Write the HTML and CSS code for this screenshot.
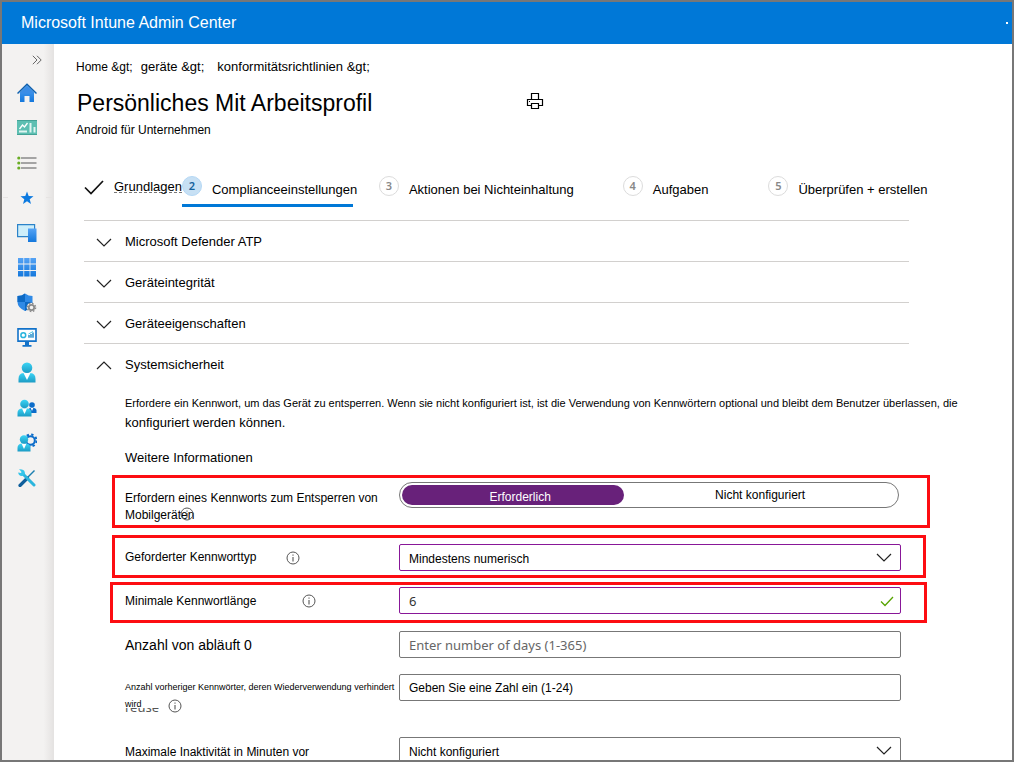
FILE: index.html
```
<!DOCTYPE html>
<html lang="de">
<head>
<meta charset="utf-8">
<title>Microsoft Intune Admin Center</title>
<link rel="stylesheet" href="styles.css">
</head>
<body>
<svg class="defs" aria-hidden="true">
  <defs>
    <linearGradient id="cyan" x1="0" y1="0" x2="0" y2="1"><stop offset="0" stop-color="#3bd4f5"/><stop offset="1" stop-color="#1c9bc4"/></linearGradient>
    <linearGradient id="blue" x1="0" y1="0" x2="0" y2="1"><stop offset="0" stop-color="#55a3f5"/><stop offset="1" stop-color="#1478dc"/></linearGradient>
    <symbol id="down" viewBox="0 0 16 9"><path d="M1 1l7 7 7-7" fill="none" stroke="#222" stroke-width="1.2"/></symbol>
    <symbol id="info" viewBox="0 0 14 14"><circle cx="7" cy="7" r="6" fill="none" stroke="#555"/><path d="M7 6v4.500M7 3.500v1.200" stroke="#444" stroke-width="1"/></symbol>
  </defs>
</svg>
<div class="app">
  <header class="topbar"><span>Microsoft Intune Admin Center</span><span class="topbar-dot"></span></header>
  <div class="shell">
    <nav class="sidebar" aria-label="Hauptmenü">
      <button class="expand" aria-label="Menü erweitern"><svg width="10" height="10" viewBox="0 0 10 10"><path d="M.8.8L5 5 .8 9.2M5 .8L9.2 5 5 9.2" fill="none" stroke="#666" stroke-width="1"/></svg></button>
      <a class="nav-item" href="#" aria-label="Startseite"><svg width="20" height="20" viewBox="0 0 20 20"><path d="M3 9l7-7 7 7v10h-4.500v-6h-5v6H3z" fill="url(#blue)"/><path d="M.5 10.500L10 1.200l9.500 9.300" fill="none" stroke="#0c5fae" stroke-width="1.500"/><path d="M2.500 10.500L10 3l7.500 7.500z" fill="#3b8de6"/></svg></a>
      <a class="nav-item" href="#" aria-label="Dashboard"><svg width="20" height="15" viewBox="0 0 20 15"><path fill="#5dbfb2" d="M0 0h20v15H0z"/><path d="M0 .5h20M0 14.500h20" stroke="#43a296"/><path d="M2.500 9l3-4 2 2 3-4" fill="none" stroke="#fff" stroke-width="1.300"/><path d="M2 11.500h8M13.500 3v9.500M17.500 7v5.500" stroke="#dff5f1" stroke-width="2"/></svg></a>
      <a class="nav-item" href="#" aria-label="Alle Dienste"><svg width="20" height="14" viewBox="0 0 20 14"><path d="M4 2h15.500M4 7h15.500M4 12h15.500" stroke="#8b8b8b" stroke-width="1.500"/><g fill="#6aad25"><circle cx="1.800" cy="2" r="1.600"/><circle cx="1.800" cy="7" r="1.600"/><circle cx="1.800" cy="12" r="1.600"/></g></svg></a>
      <a class="nav-item nav-favorites" href="#" aria-label="Favoriten"><svg width="14" height="14" viewBox="0 0 14 14"><path fill="#0c7ae0" d="M7 .5l1.700 4.500 4.800.2-3.800 3 1.300 4.900-4-2.800-4 2.800 1.300-4.900-3.800-3L5.300 5z"/></svg></a>
      <a class="nav-item" href="#" aria-label="Geräte"><svg width="20" height="20" viewBox="0 0 20 20"><path d="M.6 1.600h17v12H.6z" fill="#cdeefa" stroke="#2b83c9" stroke-width="1.200"/><path fill="url(#blue)" d="M11 5.500h8.500V19H11z"/></svg></a>
      <a class="nav-item" href="#" aria-label="Apps"><svg width="18" height="19" viewBox="0 0 18 19"><path fill="url(#blue)" d="M0 0h5.400v5.500H0zM6.200 0h5.400v5.500H6.200zM12.400 0H18v5.500h-5.600zM0 6.500h5.400V12H0zM6.200 6.500h5.400V12H6.200zM12.400 6.500H18V12h-5.600zM0 13h5.400v5.500H0zM6.200 13h5.400v5.500H6.200zM12.400 13H18v5.500h-5.600z"/></svg></a>
      <a class="nav-item" href="#" aria-label="Endpunktsicherheit"><svg width="20" height="20" viewBox="0 0 20 20"><path d="M8 .5Q11.500 3 15.500 3v6q0 5.500-7.500 9Q.5 14.500.5 9V3Q5 3 8 .5z" fill="#2f8ae6"/><path d="M8 .5v8.500H.5V3Q5 3 8 .5zM8 9h7.500q0 5.500-7.500 9z" fill="#0c69c4"/><circle cx="14.500" cy="14.500" r="4.800" fill="#f3f2f1"/><circle cx="14.500" cy="14.500" r="2.700" fill="none" stroke="#8c8c8c" stroke-width="1.800"/><circle cx="14.500" cy="14.500" r="4.100" fill="none" stroke="#8c8c8c" stroke-width="1.400" stroke-dasharray="1.610 1.610"/></svg></a>
      <a class="nav-item" href="#" aria-label="Berichte"><svg width="20" height="19" viewBox="0 0 20 19"><path d="M1 .9h18v12.200H1z" fill="#fff" stroke="#1272c9" stroke-width="1.600"/><path d="M8 13h4v4h2.500v1.700h-9V17H8z" fill="#1272c9"/><circle cx="6.300" cy="7.200" r="2.400" fill="none" stroke="#27b4dd" stroke-width="1.500"/><path d="M12 9.800V7M14 9.800V6M16 9.800V4.500" stroke="#1687c7" stroke-width="1.400"/><path d="M11.500 6L16 3.500" stroke="#4ac6e5"/></svg></a>
      <a class="nav-item" href="#" aria-label="Benutzer"><svg width="18" height="21" viewBox="0 0 18 21"><path d="M.5 20.500V17q0-5.500 5-6h7q5 .500 5 6v3.500z" fill="url(#cyan)"/><path d="M5.500 11h7L9 18z" fill="#fff"/><circle cx="9" cy="5.800" r="5.300" fill="url(#cyan)"/></svg></a>
      <a class="nav-item" href="#" aria-label="Gruppen"><svg width="20" height="18" viewBox="0 0 20 18"><path d="M11 14V11.500q0-2.500 4-3 4.500.500 4.500 3V14z" fill="#0b6cc9"/><path d="M13.500 8.500h3L15 12z" fill="#fff"/><circle cx="15" cy="6" r="2.800" fill="#0b6cc9"/><path d="M.5 17.500v-3.500q0-4 4-4.500h6q4 .500 4 4.500v3.500z" fill="url(#cyan)"/><path d="M5 9.500h5L7.500 15z" fill="#fff"/><circle cx="7.500" cy="5" r="4.300" fill="url(#cyan)"/></svg></a>
      <a class="nav-item" href="#" aria-label="Mandantenverwaltung"><svg width="20" height="19" viewBox="0 0 20 19"><circle cx="13.500" cy="7.500" r="4.300" fill="none" stroke="#0b6cc9" stroke-width="2"/><circle cx="13.500" cy="7.500" r="6" fill="none" stroke="#0b6cc9" stroke-width="1.900" stroke-dasharray="2.360 2.350"/><path d="M.5 18.500V15q0-4 4-4.500h5q4 .500 4 4.500v3.500z" fill="url(#cyan)"/><path d="M4.500 10.500h5L7 16z" fill="#fff"/><circle cx="7" cy="6.500" r="4.200" fill="url(#cyan)"/></svg></a>
      <a class="nav-item" href="#" aria-label="Problembehandlung"><svg width="18" height="18" viewBox="0 0 18 18"><path d="M16.500 1.500L10 8" stroke="#1c7fb0" stroke-width="1.500"/><path d="M9.500 9L2 16.500" stroke="#0f5f9c" stroke-width="3.200" stroke-linecap="round"/><path d="M5 5l11 11" stroke="#2bb5dd" stroke-width="3" stroke-linecap="round"/><path d="M3.800.6Q1 0 1 0L3.500 3 3 4 .2 3.500Q.5 7.500 5 6.800L7 5Q7 1 3.800.6z" fill="#35c5ea"/></svg></a>
    </nav>
    <main class="content">
      <nav class="breadcrumb" aria-label="Brotkrumen"><a href="#">Home &amp;gt;</a><a href="#">geräte &amp;gt;</a><a href="#">konformitätsrichtlinien &amp;gt;</a></nav>
      <div class="title-row">
        <h1>Persönliches Mit Arbeitsprofil</h1>
        <button class="print" aria-label="Drucken"><svg width="18" height="18" viewBox="0 0 18 18"><path d="M5.500 7.500v-6h7v6M5.500 13.500h-4v-6h15v6h-4M5.500 11.500h7v5h-7z" fill="none" stroke="#000" stroke-width="1.200"/><path d="M3 9h1v1H3z"/></svg></button>
      </div>
      <p class="subtitle">Android für Unternehmen</p>

      <ol class="steps">
        <li class="step step-done"><svg width="20" height="15" viewBox="0 0 20 15"><path d="M1 7.500l6 6L19 1" fill="none" stroke="#111" stroke-width="1.700"/></svg><span>Grundlagen</span></li>
        <li class="step step-current"><b>2</b><span>Complianceeinstellungen</span></li>
        <li class="step step-actions"><b>3</b><span>Aktionen bei Nichteinhaltung</span></li>
        <li class="step step-tasks"><b>4</b><span>Aufgaben</span></li>
        <li class="step step-review"><b>5</b><span>Überprüfen + erstellen</span></li>
      </ol>

      <div class="sections">
        <button class="section"><svg width="16" height="9"><use href="#down"/></svg>Microsoft Defender ATP</button>
        <button class="section"><svg width="16" height="9"><use href="#down"/></svg>Geräteintegrität</button>
        <button class="section"><svg width="16" height="9"><use href="#down"/></svg>Geräteeigenschaften</button>
        <button class="section section-open" aria-expanded="true"><svg width="16" height="9"><use href="#down"/></svg>Systemsicherheit</button>
      </div>

      <div class="intro">
        <p>Erfordere ein Kennwort, um das Gerät zu entsperren. Wenn sie nicht konfiguriert ist, ist die Verwendung von Kennwörtern optional und bleibt dem Benutzer überlassen, die <span class="intro-end">konfiguriert werden können.</span></p>
        <a href="#">Weitere Informationen</a>
      </div>

      <form class="settings">
        <div class="row marked row-require">
          <div class="label" id="require">Erfordern eines Kennworts zum Entsperren von Mobilgeräten<svg class="info over" width="14" height="14"><use href="#info"/></svg></div>
          <div class="toggle" role="group" aria-labelledby="require">
            <button type="button" class="selected" aria-pressed="true">Erforderlich</button>
            <button type="button" aria-pressed="false">Nicht konfiguriert</button>
          </div>
        </div>
        <div class="row marked row-type">
          <div class="label"><label for="type">Geforderter Kennworttyp</label><svg class="info info-type" width="14" height="14"><use href="#info"/></svg></div>
          <div class="field active"><select id="type"><option>Mindestens numerisch</option></select><svg class="mark" width="16" height="9"><use href="#down"/></svg></div>
        </div>
        <div class="row marked row-length">
          <div class="label"><label for="length">Minimale Kennwortlänge</label><svg class="info info-length" width="14" height="14"><use href="#info"/></svg></div>
          <div class="field active"><input class="ui" id="length" value="6"><svg class="mark valid" width="14" height="11" viewBox="0 0 14 11"><path d="M1 5.500l4 4L13 1" fill="none" stroke="#57a300" stroke-width="1.300"/></svg></div>
        </div>
        <div class="row row-expiry">
          <div class="label"><label class="large" for="days">Anzahl von abläuft 0</label></div>
          <div class="field"><input class="ui" id="days" placeholder="Enter number of days (1-365)"></div>
        </div>
        <div class="row row-history">
          <div class="label small"><label for="history">Anzahl vorheriger Kennwörter, deren Wiederverwendung verhindert wird</label><span class="cut"><span>reuse</span></span><svg class="info info-history" width="14" height="14"><use href="#info"/></svg></div>
          <div class="field"><input id="history" placeholder="Geben Sie eine Zahl ein (1-24)"></div>
        </div>
        <div class="row row-idle">
          <div class="label"><label for="idle">Maximale Inaktivität in Minuten vor</label></div>
          <div class="field"><select id="idle"><option>Nicht konfiguriert</option></select><svg class="mark" width="16" height="9"><use href="#down"/></svg></div>
        </div>
      </form>
    </main>
  </div>
</div>
</body>
</html>
```
FILE: styles.css
```
* { box-sizing: border-box; }
body { margin: 0; font: 13px/16px "Liberation Sans", Arial, sans-serif; color: #000; background: #fff; }
h1, p, ol { margin: 0; padding: 0; font-weight: 400; }
a { color: inherit; text-decoration: none; }
button { border: 0; padding: 0; background: none; font: inherit; color: inherit; text-align: left; }
svg { display: block; flex: none; }
.defs { position: absolute; width: 0; height: 0; }

.app { display: flex; flex-direction: column; height: 100vh; border: 2px solid #777; overflow: hidden; }
.topbar { display: flex; align-items: center; justify-content: space-between; flex: none; height: 42px; padding: 0 4px 0 19px; background: #0078d7; color: #fff; font-size: 16px; }
.topbar-dot { width: 2px; height: 2px; background: #fff; }
.shell { display: flex; flex: 1; min-height: 0; }

.sidebar { display: flex; flex-direction: column; flex: none; width: 52px; background: linear-gradient(90deg, #f3f2f1 80%, #e4e2e1); }
.expand { display: flex; align-items: center; justify-content: flex-end; height: 31px; padding-right: 12px; }
.nav-item { display: flex; align-items: center; justify-content: center; height: 35px; padding-right: 3px; }
.nav-favorites { gap: 12px; padding-right: 0; }
.nav-favorites::before { content: ""; width: 5px; height: 1px; background: #e6e4e3; }
.nav-favorites::after { content: ""; width: 8px; height: 1px; background: #e6e4e3; }

.content { flex: 1; min-width: 0; padding: 15px 0 0; overflow: hidden; }
.breadcrumb { display: flex; padding-left: 22px; gap: 8px; }
.breadcrumb a:first-child { font-size: 12px; }
.breadcrumb a:last-child { margin-left: 5px; }
.title-row { display: flex; align-items: center; gap: 154px; margin-top: 14px; padding-left: 23px; }
h1 { font-size: 23px; line-height: 28px; }
.print { padding-bottom: 4px; }
.subtitle { margin-top: 5px; padding-left: 22px; font-size: 12px; }

.steps { display: flex; margin-top: 38px; padding-left: 30px; list-style: none; }
.step { display: flex; gap: 10px; height: 31px; white-space: nowrap; }
.step span { padding-top: 6px; }
.step b { flex: none; width: 20px; height: 20px; border: 1px solid #dcdcdc; border-radius: 50%; color: #888; font: 600 11px/18px "Noto Sans", sans-serif; text-align: center; }
.step-done svg { margin-top: 4px; }
.step-done span { height: 17px; padding-top: 3px; border-bottom: 1px dashed #777; }
.step-current { border-bottom: 3px solid #0078d7; width: 171px; }
.step-actions { margin-left: 26px; }
.step-current b { border-color: #b5d8f5; background: #c7e0f4; color: #14609c; }
.step-tasks { margin-left: 49px; }
.step-review { margin-left: 60px; }

.sections { display: flex; flex-direction: column; margin: 13px 103px 0 30px; }
.section { display: flex; align-items: center; gap: 13px; height: 41px; padding: 2px 0 0 12px; border-top: 1px solid #d2d0ce; }
.section-open svg { transform: rotate(180deg); }

.intro { padding: 9px 44px 0 71px; line-height: 20px; }
.intro p { margin-bottom: 15px; font-size: 11px; }
.intro-end { font-size: 13px; }

.settings { margin-top: 7px; font-size: 12px; }
.row { display: flex; align-items: flex-start; margin: 0 111px 0 71px; }
.marked { border: 3px solid #fd0d12; }
.label { display: flex; align-items: center; flex: none; width: 274px; line-height: 17px; }
.large { font-size: 14px; }
.row-require { height: 53px; margin: 0 82px 0 58px; padding: 4px 28px 0 10px; }
.row-require .label { display: block; padding-top: 8px; }
.info.over { display: inline-block; margin-left: -14px; vertical-align: -2px; }
.row-type { height: 43px; margin: 7px 86px 0 58px; padding: 6px 22px 0 10px; }
.row-type .label { height: 27px; }
.info-type { margin-left: 30px; }
.row-length { height: 41px; margin: 4px 85px 0 56px; padding: 2px 23px 0 12px; }
.row-length .label { height: 28px; }
.info-length { margin-left: 46px; }
.row-expiry { height: 27px; margin-top: 8px; }
.row-expiry .label { height: 28px; }
.row-history { height: 27px; margin-top: 16px; }
.row-idle { margin-top: 36px; }
.row-idle .label { height: 31px; }
.small { position: relative; display: block; padding-top: 5px; font-size: 9px; }
.cut { position: absolute; left: 0; top: 34px; height: 4px; overflow: hidden; display: flex; align-items: flex-end; font: 13px/9px "Noto Sans", sans-serif; color: #555; }
.info-history { position: absolute; left: 43px; top: 25px; }

.toggle { display: flex; flex: 1; height: 26px; padding: 2px; border: 1px solid #777; border-radius: 13px; }
.toggle button { width: 55%; height: 20px; border-radius: 10px; text-align: center; }
.toggle .selected { width: 45%; padding: 3px 0 0 14px; background: #68217a; color: #fff; }

.field { position: relative; flex: 1; }
.field input, .field select { display: block; width: 100%; height: 27px; margin: 0; padding: 0 9px; border: 1px solid #777; border-radius: 2px; background: #fff; color: #000; font: inherit; appearance: none; }
.field select { padding-top: 3px; }
.field input::placeholder { color: #000; opacity: 1; }
.field input.ui { font-family: "Noto Sans", sans-serif; font-size: 13px; color: #333; }
.field input.ui::placeholder { color: #666; }
.field.active input, .field.active select { border-color: #881798; }
.mark { position: absolute; right: 9px; top: 9px; pointer-events: none; }
.mark.valid { right: 7px; }
```
